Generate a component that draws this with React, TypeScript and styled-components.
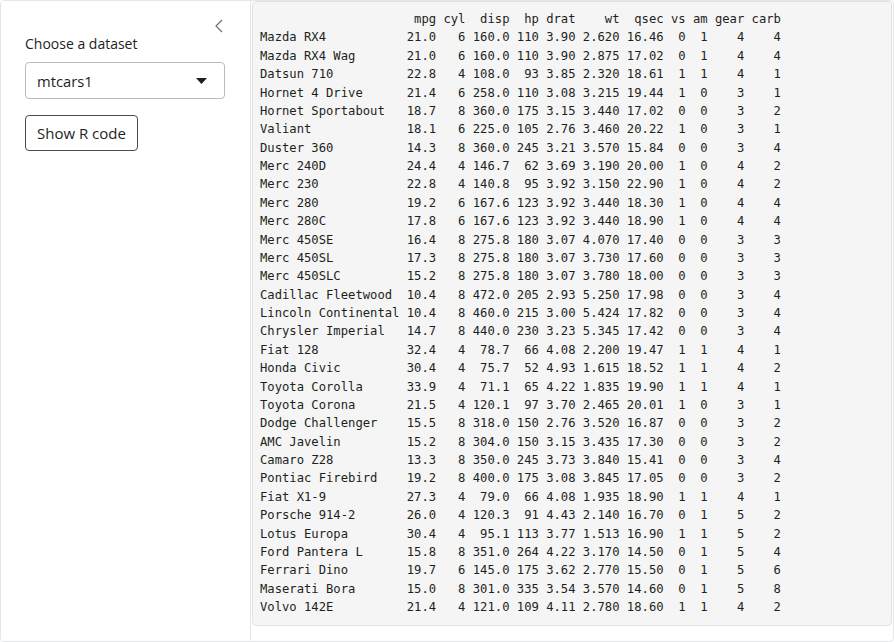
import React from 'react';
import styled, { createGlobalStyle } from 'styled-components';

const GlobalStyle = createGlobalStyle`
  html, body {
    margin: 0;
    padding: 0;
    background: #ffffff;
  }
  body {
    font-family: 'Open Sans', 'Noto Sans', sans-serif;
    color: #1d1f21;
  }
  * {
    box-sizing: border-box;
  }
`;

const Layout = styled.div`
  display: grid;
  grid-template-columns: 250px 1fr;
  width: 894px;
  height: 642px;
  border: 1px solid #e4e7ea;
  border-radius: 4px;
  overflow: hidden;
`;

const Sidebar = styled.aside`
  position: relative;
  display: flex;
  flex-direction: column;
  align-items: flex-start;
  padding: 31px 24px;
  border-right: 1px solid #e4e7ea;
  background: #ffffff;
`;

const CollapseToggle = styled.button`
  position: absolute;
  top: 17px;
  right: 24px;
  width: 14px;
  height: 16px;
  padding: 0;
  border: none;
  background: none;
  display: flex;
  align-items: center;
  justify-content: center;
  color: #6c6f72;
`;

const Label = styled.label`
  font-size: 14px;
  line-height: 24px;
  margin-bottom: 6px;
`;

const Select = styled.div`
  display: flex;
  align-items: center;
  justify-content: space-between;
  width: 200px;
  height: 37px;
  padding: 0 17px 0 11px;
  border: 1px solid #b7bbbf;
  border-radius: 4px;
  font-size: 14.75px;
  color: #1d1f21;
`;

const ShowCodeButton = styled.button`
  margin-top: 16px;
  height: 36px;
  padding: 0 11px;
  border: 1px solid #4a4d50;
  border-radius: 4px;
  background: #ffffff;
  font-family: 'Open Sans', 'Noto Sans', sans-serif;
  font-size: 15px;
  color: #1d1f21;
`;

const Main = styled.main`
  padding: 0 1px 0 1px;
  overflow: hidden;
`;

const Output = styled.pre`
  margin: 0;
  padding: 8px 8px 9px 7px;
  background: #f5f5f5;
  border: 1px solid #dfe2e5;
  border-radius: 4px;
  font-family: 'DejaVu Sans Mono', 'Liberation Mono', monospace;
  font-size: 12.2px;
  line-height: 18.375px;
  color: #1d1f21;
  white-space: pre;
`;

const columns: [string, number][] = [
  ['mpg', 4],
  ['cyl', 3],
  ['disp', 5],
  ['hp', 3],
  ['drat', 4],
  ['wt', 5],
  ['qsec', 5],
  ['vs', 2],
  ['am', 2],
  ['gear', 4],
  ['carb', 4],
];

const rows: [string, string][] = [
  ['Mazda RX4', '21.0 6 160.0 110 3.90 2.620 16.46 0 1 4 4'],
  ['Mazda RX4 Wag', '21.0 6 160.0 110 3.90 2.875 17.02 0 1 4 4'],
  ['Datsun 710', '22.8 4 108.0 93 3.85 2.320 18.61 1 1 4 1'],
  ['Hornet 4 Drive', '21.4 6 258.0 110 3.08 3.215 19.44 1 0 3 1'],
  ['Hornet Sportabout', '18.7 8 360.0 175 3.15 3.440 17.02 0 0 3 2'],
  ['Valiant', '18.1 6 225.0 105 2.76 3.460 20.22 1 0 3 1'],
  ['Duster 360', '14.3 8 360.0 245 3.21 3.570 15.84 0 0 3 4'],
  ['Merc 240D', '24.4 4 146.7 62 3.69 3.190 20.00 1 0 4 2'],
  ['Merc 230', '22.8 4 140.8 95 3.92 3.150 22.90 1 0 4 2'],
  ['Merc 280', '19.2 6 167.6 123 3.92 3.440 18.30 1 0 4 4'],
  ['Merc 280C', '17.8 6 167.6 123 3.92 3.440 18.90 1 0 4 4'],
  ['Merc 450SE', '16.4 8 275.8 180 3.07 4.070 17.40 0 0 3 3'],
  ['Merc 450SL', '17.3 8 275.8 180 3.07 3.730 17.60 0 0 3 3'],
  ['Merc 450SLC', '15.2 8 275.8 180 3.07 3.780 18.00 0 0 3 3'],
  ['Cadillac Fleetwood', '10.4 8 472.0 205 2.93 5.250 17.98 0 0 3 4'],
  ['Lincoln Continental', '10.4 8 460.0 215 3.00 5.424 17.82 0 0 3 4'],
  ['Chrysler Imperial', '14.7 8 440.0 230 3.23 5.345 17.42 0 0 3 4'],
  ['Fiat 128', '32.4 4 78.7 66 4.08 2.200 19.47 1 1 4 1'],
  ['Honda Civic', '30.4 4 75.7 52 4.93 1.615 18.52 1 1 4 2'],
  ['Toyota Corolla', '33.9 4 71.1 65 4.22 1.835 19.90 1 1 4 1'],
  ['Toyota Corona', '21.5 4 120.1 97 3.70 2.465 20.01 1 0 3 1'],
  ['Dodge Challenger', '15.5 8 318.0 150 2.76 3.520 16.87 0 0 3 2'],
  ['AMC Javelin', '15.2 8 304.0 150 3.15 3.435 17.30 0 0 3 2'],
  ['Camaro Z28', '13.3 8 350.0 245 3.73 3.840 15.41 0 0 3 4'],
  ['Pontiac Firebird', '19.2 8 400.0 175 3.08 3.845 17.05 0 0 3 2'],
  ['Fiat X1-9', '27.3 4 79.0 66 4.08 1.935 18.90 1 1 4 1'],
  ['Porsche 914-2', '26.0 4 120.3 91 4.43 2.140 16.70 0 1 5 2'],
  ['Lotus Europa', '30.4 4 95.1 113 3.77 1.513 16.90 1 1 5 2'],
  ['Ford Pantera L', '15.8 8 351.0 264 4.22 3.170 14.50 0 1 5 4'],
  ['Ferrari Dino', '19.7 6 145.0 175 3.62 2.770 15.50 0 1 5 6'],
  ['Maserati Bora', '15.0 8 301.0 335 3.54 3.570 14.60 0 1 5 8'],
  ['Volvo 142E', '21.4 4 121.0 109 4.11 2.780 18.60 1 1 4 2'],
];

// print the data frame the way R's print() does
const nameWidth = Math.max(...rows.map(([n]) => n.length));

const formatFrame = (): string => {
  const header =
    ' '.repeat(nameWidth) +
    columns.map(([c, w]) => ' ' + c.padStart(w)).join('');
  const body = rows.map(([name, vals]) => {
    const cells = vals.split(' ');
    return (
      name.padEnd(nameWidth) +
      cells.map((v, i) => ' ' + v.padStart(columns[i][1])).join('')
    );
  });
  return [header, ...body].join('\n');
};

const ChevronLeft = () => (
  <svg width="8" height="14" viewBox="0 0 8 14" fill="none">
    <path d="M7 1 L1 7 L7 13" stroke="currentColor" strokeWidth="1.2" />
  </svg>
);

const Caret = () => (
  <svg width="11" height="6" viewBox="0 0 11 6">
    <path d="M0 0 L11 0 L5.5 6 Z" fill="#1d1f21" />
  </svg>
);

const App: React.FC = () => {
  return (
    <>
      <GlobalStyle />
      <Layout>
        <Sidebar>
          <CollapseToggle aria-label="Toggle sidebar">
            <ChevronLeft />
          </CollapseToggle>
          <Label>Choose a dataset</Label>
          <Select>
            <span>mtcars1</span>
            <Caret />
          </Select>
          <ShowCodeButton>Show R code</ShowCodeButton>
        </Sidebar>
        <Main>
          <Output>{formatFrame()}</Output>
        </Main>
      </Layout>
    </>
  );
};

export default App;
